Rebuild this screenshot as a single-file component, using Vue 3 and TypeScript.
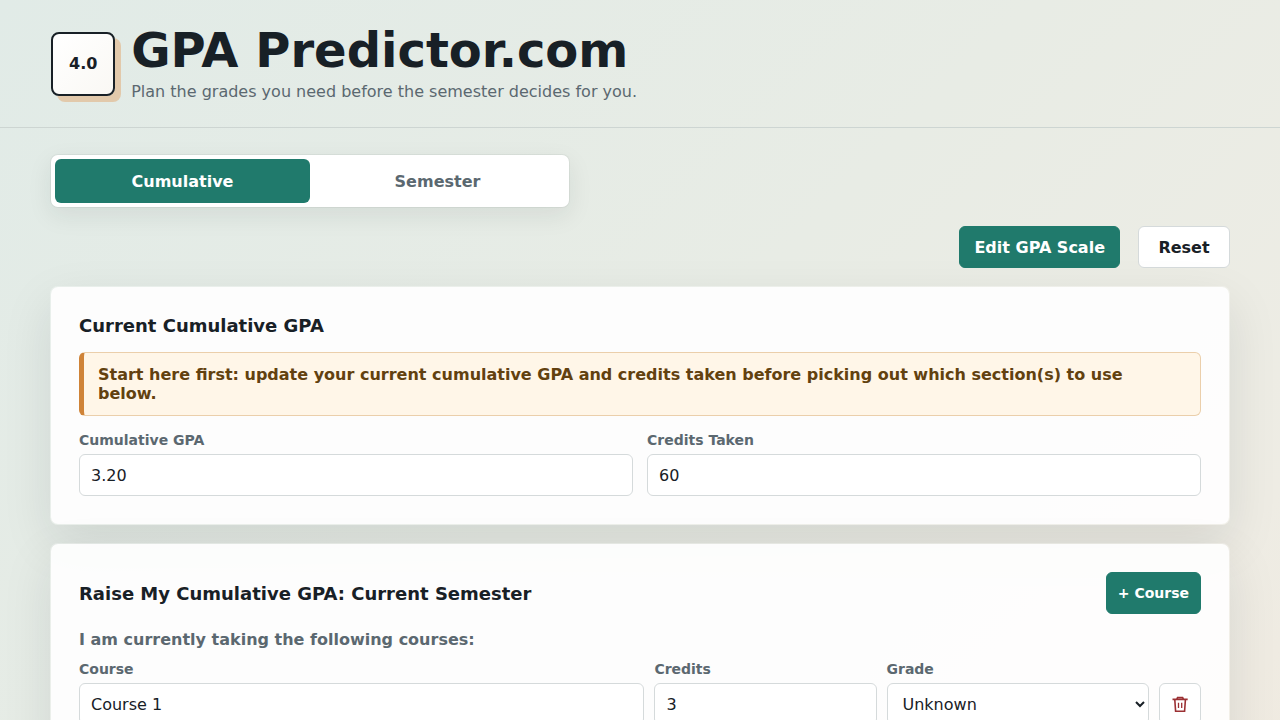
<script setup lang="ts">
import { ref } from 'vue'

interface Course {
  id: number
  name: string
  credits: number
  grade: string
}

const tab = ref<'cumulative' | 'semester'>('cumulative')
const gpa = ref('3.20')
const creditsTaken = ref('60')
const grades: string[] = ['Unknown', 'A', 'B', 'C', 'D', 'F']
const courses = ref<Course[]>([{ id: 1, name: 'Course 1', credits: 3, grade: 'Unknown' }])

function addCourse(): void {
  const id = Math.max(0, ...courses.value.map((c) => c.id)) + 1
  courses.value.push({ id, name: `Course ${id}`, credits: 3, grade: 'Unknown' })
}

function removeCourse(id: number): void {
  courses.value = courses.value.filter((c) => c.id !== id)
}

function reset(): void {
  gpa.value = '3.20'
  creditsTaken.value = '60'
}
</script>

<template>
  <div class="page">
    <header class="masthead">
      <div class="logo">4.0</div>
      <div>
        <h1>GPA Predictor.com</h1>
        <p class="tagline">Plan the grades you need before the semester decides for you.</p>
      </div>
    </header>

    <main class="content">
      <nav class="tabs">
        <button type="button" class="tab" :class="{ active: tab === 'cumulative' }" @click="tab = 'cumulative'">Cumulative</button>
        <button type="button" class="tab" :class="{ active: tab === 'semester' }" @click="tab = 'semester'">Semester</button>
      </nav>

      <div class="actions">
        <button type="button" class="btn primary">Edit GPA Scale</button>
        <button type="button" class="btn reset" @click="reset">Reset</button>
      </div>

      <section class="card">
        <h2>Current Cumulative GPA</h2>
        <p class="notice">
          Start here first: update your current cumulative GPA and credits taken before picking out which section(s) to use below.
        </p>
        <div class="pair">
          <label class="field">
            <span>Cumulative GPA</span>
            <input v-model="gpa" type="text" inputmode="decimal" />
          </label>
          <label class="field">
            <span>Credits Taken</span>
            <input v-model="creditsTaken" type="text" inputmode="numeric" />
          </label>
        </div>
      </section>

      <section class="card">
        <div class="card-head">
          <h2>Raise My Cumulative GPA: Current Semester</h2>
          <button type="button" class="btn primary small" @click="addCourse">+ Course</button>
        </div>
        <p class="lead">I am currently taking the following courses:</p>
        <div class="rows">
          <div v-for="course in courses" :key="course.id" class="course-row">
            <label class="field">
              <span>Course</span>
              <input v-model="course.name" type="text" />
            </label>
            <label class="field">
              <span>Credits</span>
              <input v-model="course.credits" type="text" inputmode="numeric" />
            </label>
            <label class="field">
              <span>Grade</span>
              <select v-model="course.grade">
                <option v-for="g in grades" :key="g" :value="g">{{ g }}</option>
              </select>
            </label>
            <button type="button" class="btn remove" aria-label="Remove course" @click="removeCourse(course.id)">
              <svg viewBox="0 0 18 18" width="18" height="18" fill="none" stroke="currentColor" aria-hidden="true">
                <path stroke-width="1.6" d="M1.5 4.4h15.2M5.8 4.2l.8-1.7h5l.8 1.7M3.8 4.8l.8 11.4h9l.8-11.4" />
                <path stroke-width="1.3" d="M7.5 7.8v5.2M10.7 7.8v5.2" />
              </svg>
            </button>
          </div>
        </div>
      </section>
    </main>
  </div>
</template>

<style>
body {
  margin: 0;
  background: #efebe3;
}
</style>

<style scoped>
.page {
  --ink: #182026;
  --muted: #5b6870;
  --line: #d5dadb;
  --green: #207a6c;
  min-height: 100vh;
  color: var(--ink);
  font-family: "DejaVu Sans", sans-serif;
  font-size: 16px;
  background: linear-gradient(135deg, #e1ebe7 0%, #e8ece5 50%, #eeece4 85%, #f0eae0 100%);
}

.page * {
  box-sizing: border-box;
}

h1,
h2,
p {
  margin: 0;
}

button,
input,
select {
  font: inherit;
  color: inherit;
}

.masthead {
  display: flex;
  align-items: center;
  gap: 16px;
  padding: 26px 4vw;
  border-bottom: 1px solid #cdd5d2;
}

.logo {
  display: grid;
  place-items: center;
  flex: none;
  width: 64px;
  height: 64px;
  border: 2px solid var(--ink);
  border-radius: 8px;
  background: linear-gradient(135deg, #ffffff, #faf8f4);
  box-shadow: 6px 6px 0 #e2c9ab;
  font-weight: 700;
}

h1 {
  font-size: 48px;
  line-height: 48px;
}

.tagline {
  margin-top: 8px;
  color: var(--muted);
}

.content {
  display: grid;
  gap: 18px;
  max-width: 1180px;
  margin: 0 auto;
  padding: 26px 0 48px;
}

.tabs {
  display: grid;
  grid-template-columns: 1fr 1fr;
  width: 100%;
  max-width: 520px;
  padding: 4px;
  border: 1px solid rgba(24, 32, 38, 0.05);
  border-radius: 8px;
  background: #ffffff;
  background-clip: padding-box;
  box-shadow: 0 8px 24px rgba(24, 32, 38, 0.08);
}

.tab {
  height: 44px;
  border: 0;
  border-radius: 6px;
  background: transparent;
  color: var(--muted);
  font-weight: 700;
  cursor: pointer;
}

.tab.active {
  background: var(--green);
  color: #ffffff;
}

.actions {
  display: flex;
  justify-content: flex-end;
  gap: 18px;
}

.btn {
  height: 42px;
  padding: 0 14px;
  border: 1px solid var(--line);
  border-radius: 6px;
  background: #ffffff;
  font-weight: 700;
  cursor: pointer;
}

.btn.primary {
  border-color: var(--green);
  background: var(--green);
  color: #ffffff;
}

.btn.reset {
  min-width: 92px;
}

.btn.small {
  padding: 0 11px;
  font-size: 14px;
}

.card {
  padding: 28px;
  border: 1px solid rgba(255, 255, 255, 0.2);
  border-radius: 8px;
  background: rgba(255, 255, 255, 0.9);
  background-clip: padding-box;
  box-shadow: 0 18px 50px rgba(24, 32, 38, 0.1);
}

h2 {
  font-size: 18px;
  line-height: 21px;
}

.notice {
  margin: 16px 0;
  padding: 12px 14px;
  border: 1px solid #ebcfab;
  border-left: 5px solid #cf8337;
  border-radius: 6px;
  background: #fff6e8;
  color: #62410f;
  font-weight: 700;
}

.pair {
  display: grid;
  grid-template-columns: 1fr 1fr;
  gap: 14px;
}

.field {
  display: grid;
  gap: 6px;
  min-width: 0;
  color: var(--muted);
  font-size: 14px;
  line-height: 16px;
  font-weight: 700;
}

.field input,
.field select {
  width: 100%;
  height: 42px;
  padding: 0 11px;
  border: 1px solid var(--line);
  border-radius: 6px;
  background-color: #ffffff;
  color: var(--ink);
  font-size: 16px;
  font-weight: 400;
}

.field select {
  padding-right: 0;
}

.card-head {
  display: flex;
  align-items: center;
  justify-content: space-between;
  gap: 16px;
}

.lead {
  margin: 16px 0 12px;
  color: var(--muted);
  font-weight: 700;
}

.rows {
  display: grid;
  gap: 12px;
}

.course-row {
  display: grid;
  grid-template-columns: 140fr 55fr 65fr 42px;
  align-items: end;
  gap: 10px;
}

.remove {
  display: grid;
  place-items: center;
  padding: 0;
  color: #9b3033;
}

@media (max-width: 1228px) {
  .content {
    margin: 0 24px;
  }
}
</style>
